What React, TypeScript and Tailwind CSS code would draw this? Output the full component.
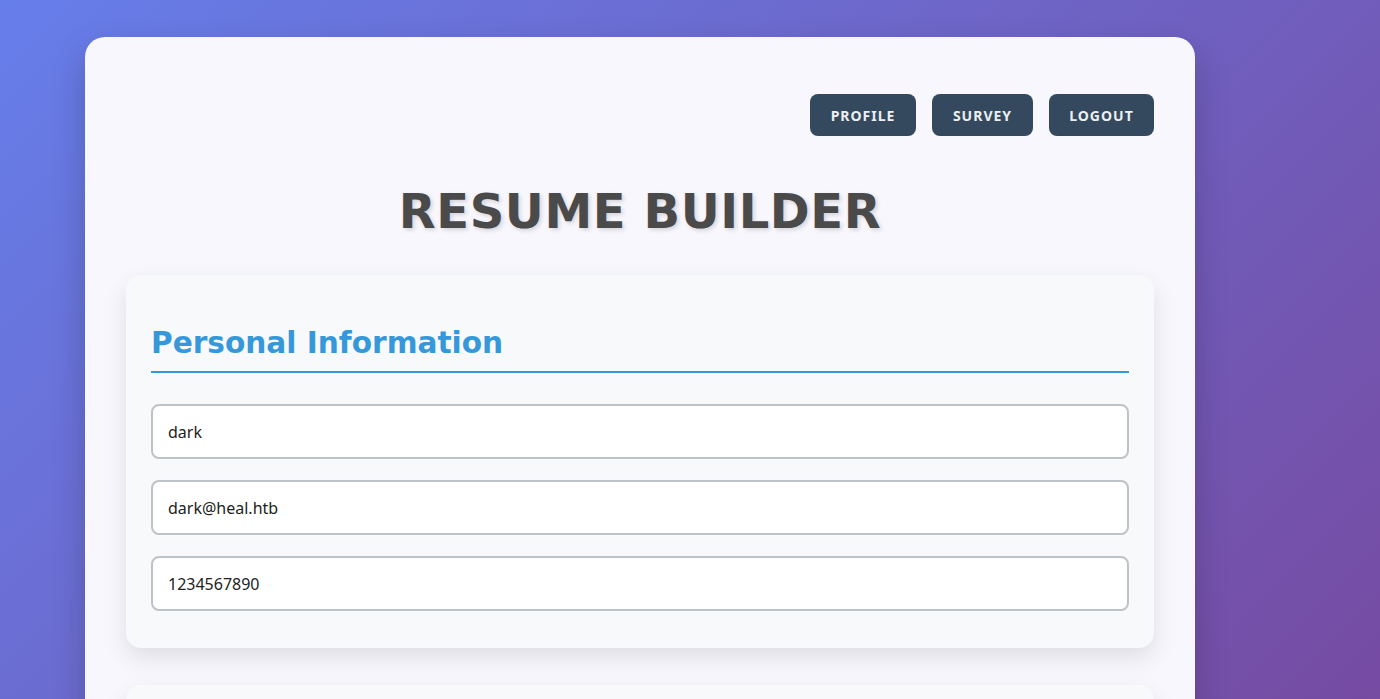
export default function App() {
  const fields = ["dark", "dark@heal.htb", "1234567890"];
  return (
    <div className="min-h-[699px] h-[699px] overflow-hidden bg-[linear-gradient(135deg,#667eea_0%,#764ba2_100%)] pt-[37px] pl-[85px]">
      {/* main white panel */}
      <div className="w-[1110px] min-h-[800px] rounded-[20px] bg-[#f8f7fd] px-[41px] pt-[57px] shadow-[0_15px_35px_rgba(0,0,0,0.2)]">
        <nav className="flex justify-end gap-4 font-['Noto_Sans',sans-serif]">
          <button className="h-[42px] w-[106px] rounded-lg bg-[#34495e] text-[14px] font-bold tracking-[1px] text-[#ecf0f1]">
            PROFILE
          </button>
          <button className="h-[42px] w-[101px] rounded-lg bg-[#34495e] text-[14px] font-bold tracking-[1px] text-[#ecf0f1]">
            SURVEY
          </button>
          <button className="h-[42px] w-[105px] rounded-lg bg-[#34495e] text-[14px] font-bold tracking-[1px] text-[#ecf0f1]">
            LOGOUT
          </button>
        </nav>

        <h1 className="mt-[47px] mb-[36px] text-center font-['DejaVu_Sans',sans-serif] text-[48px] font-bold leading-[56px] tracking-[0.6px] text-[#4a4a4a] [text-shadow:2px_2px_4px_rgba(0,0,0,0.15)]">
          RESUME BUILDER
        </h1>

        <section className="rounded-[15px] bg-[#f8f9fa] px-[25px] pt-[51px] pb-[37px] shadow-[0_10px_25px_rgba(0,0,0,0.1)]">
          <h2 className="border-b-2 border-[#3498db] pb-[11px] font-['DejaVu_Sans',sans-serif] text-[29.6px] font-bold leading-[34px] text-[#3498db]">
            Personal Information
          </h2>
          <div className="mt-[31px] flex flex-col gap-[21px]">
            {fields.map((v) => (
              <input
                key={v}
                readOnly
                value={v}
                className="h-[55px] w-full rounded-lg border-2 border-[#bdc3c7] bg-white px-[15px] font-['Noto_Sans',sans-serif] text-[16px] text-[#222] outline-none"
              />
            ))}
          </div>
        </section>

        <section className="mt-[37px] h-[200px] rounded-[15px] bg-[#f8f9fa] shadow-[0_10px_25px_rgba(0,0,0,0.1)]" />
      </div>
    </div>
  );
}
